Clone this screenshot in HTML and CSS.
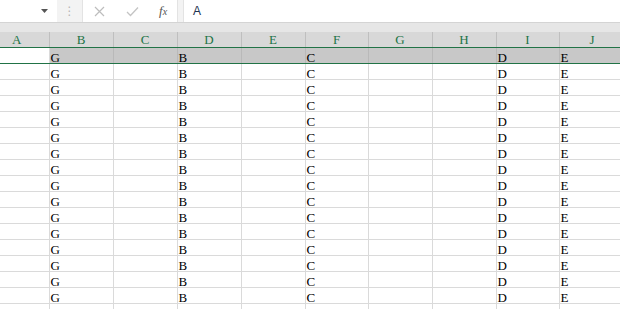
FILE: index.html
```html
<!DOCTYPE html>
<html lang="en">
<head>
    <meta charset="UTF-8">
    <title>Sheet</title>
    <link rel="stylesheet" href="styles.css">
</head>
<body>
    <!-- Formula bar -->
    <div class="formula-bar">
        <div class="name-box">
            <svg class="drop" width="7" height="4" viewBox="0 0 7 4"><path d="M0 0H7L3.5 4Z" fill="#555"/></svg>
        </div>
        <div class="grip">&#8942;</div>
        <div class="buttons">
            <svg width="11" height="11" viewBox="0 0 11 11"><path d="M1 1L10 10M10 1L1 10" stroke="#bdbdbd" stroke-width="1.2"/></svg>
            <svg width="13" height="11" viewBox="0 0 13 11"><path d="M1 6L4.5 9.5L12 1.5" stroke="#c4c4c4" stroke-width="1.3" fill="none"/></svg>
            <span class="fx">f<small>x</small></span>
        </div>
        <div class="formula-input">A</div>
    </div>
    <div class="band"></div>

    <!-- Grid (column A is scrolled partly out of view) -->
    <div class="viewport">
    <table class="sheet">
        <colgroup>
            <col style="width:49px"><col style="width:64px"><col style="width:64px"><col style="width:64px"><col style="width:64px">
            <col style="width:63px"><col style="width:64px"><col style="width:64px"><col style="width:63px"><col style="width:66px">
        </colgroup>
        <thead>
            <tr><th class="cut">A</th><th>B</th><th>C</th><th>D</th><th>E</th><th>F</th><th>G</th><th>H</th><th>I</th><th>J</th></tr>
        </thead>
        <tbody>
            <tr class="selected"><td class="blank"></td><td>G</td><td></td><td>B</td><td></td><td>C</td><td></td><td></td><td>D</td><td>E</td></tr>
            <tr><td></td><td>G</td><td></td><td>B</td><td></td><td>C</td><td></td><td></td><td>D</td><td>E</td></tr>
            <tr><td></td><td>G</td><td></td><td>B</td><td></td><td>C</td><td></td><td></td><td>D</td><td>E</td></tr>
            <tr><td></td><td>G</td><td></td><td>B</td><td></td><td>C</td><td></td><td></td><td>D</td><td>E</td></tr>
            <tr><td></td><td>G</td><td></td><td>B</td><td></td><td>C</td><td></td><td></td><td>D</td><td>E</td></tr>
            <tr><td></td><td>G</td><td></td><td>B</td><td></td><td>C</td><td></td><td></td><td>D</td><td>E</td></tr>
            <tr><td></td><td>G</td><td></td><td>B</td><td></td><td>C</td><td></td><td></td><td>D</td><td>E</td></tr>
            <tr><td></td><td>G</td><td></td><td>B</td><td></td><td>C</td><td></td><td></td><td>D</td><td>E</td></tr>
            <tr><td></td><td>G</td><td></td><td>B</td><td></td><td>C</td><td></td><td></td><td>D</td><td>E</td></tr>
            <tr><td></td><td>G</td><td></td><td>B</td><td></td><td>C</td><td></td><td></td><td>D</td><td>E</td></tr>
            <tr><td></td><td>G</td><td></td><td>B</td><td></td><td>C</td><td></td><td></td><td>D</td><td>E</td></tr>
            <tr><td></td><td>G</td><td></td><td>B</td><td></td><td>C</td><td></td><td></td><td>D</td><td>E</td></tr>
            <tr><td></td><td>G</td><td></td><td>B</td><td></td><td>C</td><td></td><td></td><td>D</td><td>E</td></tr>
            <tr><td></td><td>G</td><td></td><td>B</td><td></td><td>C</td><td></td><td></td><td>D</td><td>E</td></tr>
            <tr><td></td><td>G</td><td></td><td>B</td><td></td><td>C</td><td></td><td></td><td>D</td><td>E</td></tr>
            <tr><td></td><td>G</td><td></td><td>B</td><td></td><td>C</td><td></td><td></td><td>D</td><td>E</td></tr>
            <tr><td></td><td>G</td><td></td><td>B</td><td></td><td>C</td><td></td><td></td><td>D</td><td>E</td></tr>
        </tbody>
    </table>
    </div>
</body>
</html>
```

FILE: styles.css
```css
/* Basic reset */
* {
    margin: 0;
    padding: 0;
    box-sizing: border-box;
}

html, body {
    height: 100%;
    overflow: hidden;
    background: #fff;
}

/* Formula bar */
.formula-bar {
    display: flex;
    height: 22px;
    background-color: #f3f3f3;
}

.name-box {
    width: 57px;
    background: #fff;
    display: flex;
    align-items: center;
    justify-content: flex-end;
    padding-right: 9px;
}

.grip {
    width: 25px;
    display: flex;
    align-items: center;
    justify-content: center;
    color: #b5b5b5;
    font-family: "DejaVu Sans", sans-serif;
    font-size: 12px;
}

.buttons {
    width: 96px;
    background: #fff;
    display: flex;
    align-items: center;
    gap: 21px;
    padding-left: 11px;
    border-left: 1px solid #e3e3e3;
    border-right: 1px solid #e3e3e3;
}

.fx {
    font-family: "Liberation Serif", serif;
    font-style: italic;
    font-size: 13px;
    color: #555;
    margin-left: -1px;
}

.fx small {
    font-size: 10px;
}

.formula-input {
    flex: 1;
    margin-left: 5px;
    background: #fff;
    border-left: 1px solid #e3e3e3;
    padding-left: 9px;
    font-family: "Liberation Sans", sans-serif;
    font-size: 12px;
    line-height: 22px;
    color: #1e3350;
}

.band {
    height: 10px;
    background-color: #e6e6e6;
    border-top: 1px solid #d4d4d4;
}

/* Sheet grid */
.viewport {
    overflow: hidden;
}

.sheet {
    border-collapse: collapse;
    table-layout: fixed;
    width: 625px;
    font-family: "Liberation Serif", serif;
    font-size: 13px;
}

.sheet th {
    height: 15px;
    background-color: #d8d8d8;
    color: #217346;
    font-weight: normal;
    text-align: center;
    line-height: 14px;
    padding-top: 1px;
    border-right: 1px solid #bfbfbf;
    border-bottom: 1px solid #217346;
    overflow: hidden;
}

.sheet th.cut {
    padding-right: 15px;
}

.sheet td {
    height: 16px;
    padding: 0 0 0 1px;
    line-height: 10px;
    vertical-align: bottom;
    color: #000;
    border-right: 1px solid #dadada;
    border-bottom: 1px solid #dadada;
    white-space: nowrap;
    overflow: hidden;
}

.sheet tr.selected td {
    background-color: #c8c8c8;
    border-right-color: #b9b9b9;
    border-bottom: 1px solid #217346;
}

.sheet tr.selected td.blank {
    background-color: #fff;
    border-right-color: #dadada;
}
```
